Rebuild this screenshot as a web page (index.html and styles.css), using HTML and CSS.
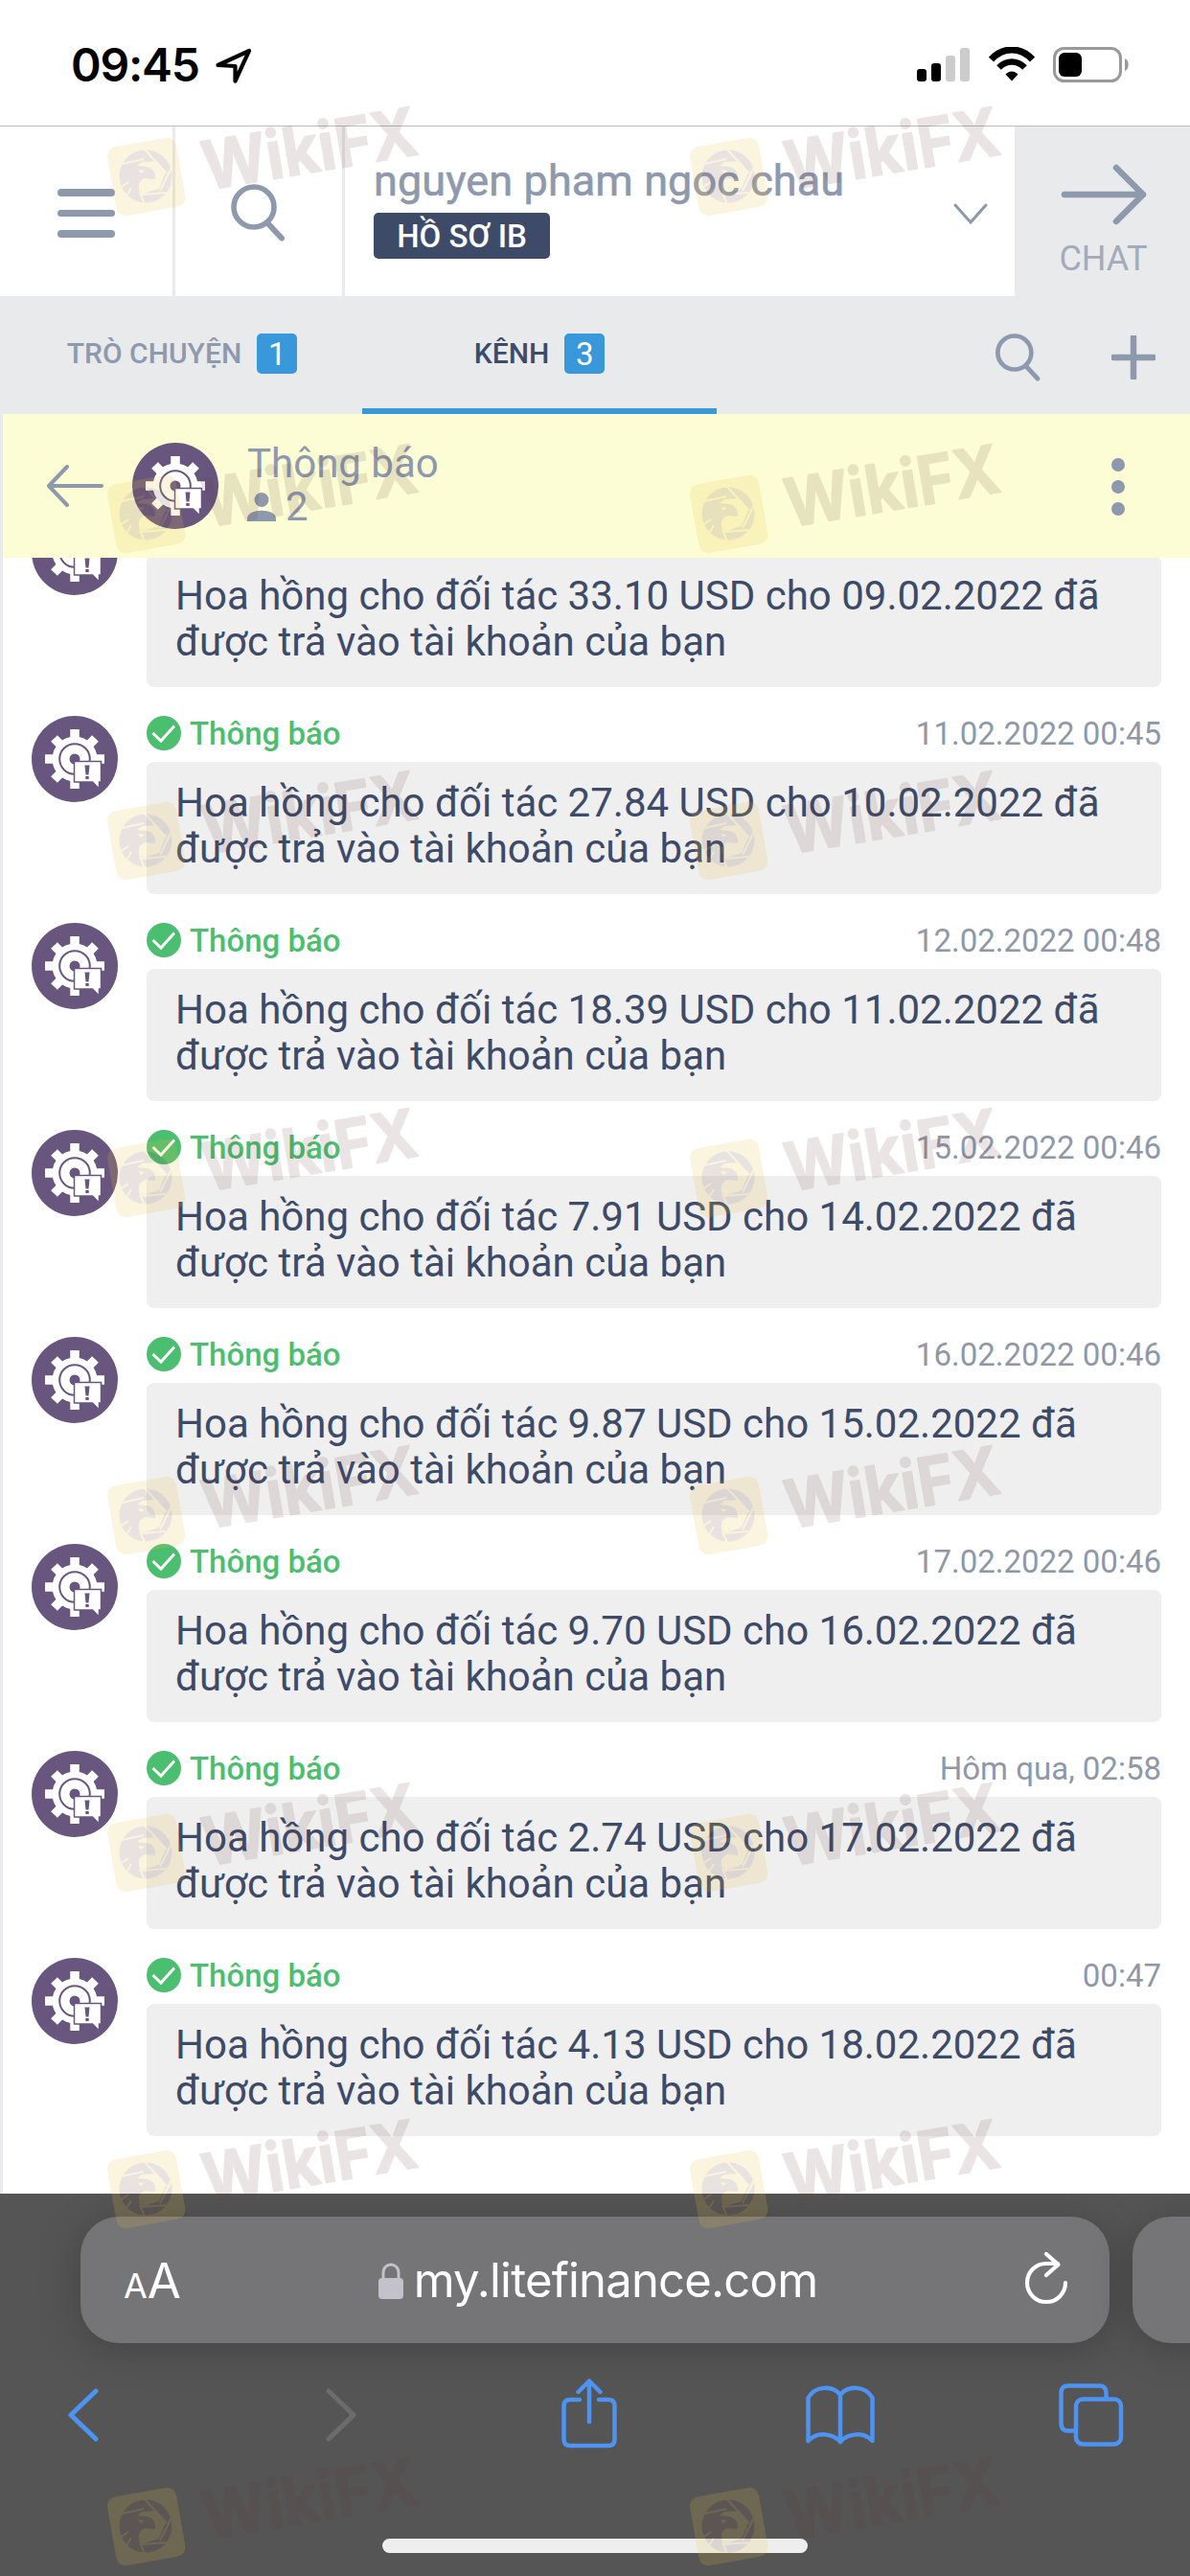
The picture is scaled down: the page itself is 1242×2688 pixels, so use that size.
FILE: index.html
```html
<!DOCTYPE html>
<html lang="vi">
<head>
	<meta charset="UTF-8">
	<meta name="viewport" content="width=device-width, initial-scale=1.0">
	<title>Thông báo</title>
	<link rel="stylesheet" href="styles.css">
</head>
<body>
	<!-- shared icons -->
	<svg class="defs" width="0" height="0">
		<symbol id="avatar" viewBox="0 0 90 90">
			<circle cx="45" cy="45" r="45" fill="#68567f"/>
			<g stroke="#fff" stroke-width="9.5">
				<path d="M45 14v62M14 45h62M23.500 23.500l43 43M66.500 23.500l-43 43"/>
			</g>
			<circle cx="45" cy="45" r="23.500" fill="#fff"/>
			<circle cx="45" cy="45" r="15.800" fill="none" stroke="#68567f" stroke-width="2"/>
			<circle cx="45" cy="45" r="5.500" fill="#68567f"/>
			<path d="M44.500 47.500h28v21.500h-2v7l-7-7h-19z" fill="#fff" stroke="#68567f" stroke-width="1.500"/>
			<path d="M55.500 51.500h5l-1 10h-3zM56.300 63h3.400v3h-3.400z" fill="#68567f"/>
		</symbol>
		<symbol id="check" viewBox="0 0 36 36">
			<circle cx="18" cy="18" r="18" fill="#4bbf6f"/>
			<path d="M6.500 18l8.500 8L29 10.500" fill="none" stroke="#fff" stroke-width="3"/>
		</symbol>
		<symbol id="search" viewBox="0 0 60 62">
			<circle cx="25" cy="25" r="21" fill="none" stroke="currentColor" stroke-width="5.600"/>
			<path d="M39.500 42L54 57.500" stroke="currentColor" stroke-width="6" stroke-linecap="round"/>
		</symbol>
		<symbol id="wm" viewBox="0 0 360 130">
			<g opacity=".17">
				<rect x="16.200" y="48" width="73" height="73" rx="10" transform="rotate(-10 52.700 84.500)" fill="#ecc040"/>
				<circle cx="52" cy="84" r="27.500" fill="#7d5a50"/>
				<path d="M48 69l16-1 9 12-7 17-16 5-4-1c-3-8 0-14 6-15l10 1c1-7-3-12-9-13l-10-1z" fill="#ecc040"/>
				<path d="M27 71l23-5M51 56l23 25M80 73L67 99M73 101l-26 2M46 101l5 12M37 96l-6 10M34 90l-9 6" fill="none" stroke="#ecc040" stroke-width="2"/>
				<path d="M44 77l7 1-4 3z" fill="#ecc040"/>
			</g>
			<text x="0" y="0" transform="translate(115.500 98.500) rotate(-9.500)" textLength="226" lengthAdjust="spacingAndGlyphs">WikiFX</text>
		</symbol>
	</svg>

	<div class="phone">
		<div class="status">
			<span class="clock">09:45</span>
			<svg class="location" width="40" height="40" viewBox="0 0 40 40"><path d="M3.500 19L36 4 21.500 35.500V20z" fill="none" stroke="#000" stroke-width="4.200" stroke-linejoin="round"/></svg>
			<svg class="signal" width="56" height="36" viewBox="0 0 56 36">
				<rect x="0" y="22" width="10" height="13" rx="3"/>
				<rect x="15" y="16" width="10" height="19" rx="3"/>
				<rect x="30" y="8" width="10" height="27" rx="3" fill="#ccc"/>
				<rect x="45" y="0" width="10" height="35" rx="3" fill="#ccc"/>
			</svg>
			<svg class="wifi" width="48" height="36" viewBox="0 0 48 36">
				<path d="M2.500 13C15-.5 33-.5 45.500 13" fill="none" stroke="#000" stroke-width="7"/>
				<path d="M10.500 21.500c8-8 19-8 27 0" fill="none" stroke="#000" stroke-width="6.500"/>
				<path d="M17.500 28.500c4-4 9-4 13 0L24 35.500z"/>
			</svg>
			<svg class="battery" width="80" height="38" viewBox="0 0 80 38">
				<rect x="1.500" y="1.500" width="69" height="34" rx="10" fill="none" stroke="#999" stroke-width="3"/>
				<rect x="6" y="6" width="24" height="25" rx="6"/>
				<path d="M75 12c5 2 5 11 0 13z" fill="#999"/>
			</svg>
		</div>

		<div class="header">
			<a class="menu"><i></i><i></i><i></i></a>
			<a class="find"><svg width="60" height="62"><use href="#search"/></svg></a>
			<div class="profile">
				<div>
					<div class="name">nguyen pham ngoc chau</div>
					<span class="tag">HỒ SƠ IB</span>
				</div>
				<svg width="36" height="24" viewBox="0 0 36 24"><path d="M2 3l16 18L34 3" fill="none" stroke="#8e99ad" stroke-width="3" stroke-linecap="round"/></svg>
			</div>
			<a class="chat">
				<svg width="90" height="64" viewBox="0 0 90 64"><path d="M4 32h82M58 4l28 28-28 28" fill="none" stroke="#8e99ad" stroke-width="6.500" stroke-linecap="round" stroke-linejoin="round"/></svg>
				<span>CHAT</span>
			</a>
		</div>

		<div class="tabs">
			<a class="tab">TRÒ CHUYỆN <b>1</b></a>
			<a class="tab active">KÊNH <b>3</b></a>
			<svg class="tab-search" width="50" height="52"><use href="#search"/></svg>
			<svg class="plus" width="46" height="46" viewBox="0 0 46 46"><path d="M23 2v42M2 23h42" stroke="#8e99ad" stroke-width="6.500" stroke-linecap="round"/></svg>
		</div>

		<div class="room">
			<svg class="back" width="62" height="44" viewBox="0 0 62 44"><path d="M59 22H4M23 2L4 22l19 20" fill="none" stroke="#8e99ad" stroke-width="4" stroke-linecap="round" stroke-linejoin="round"/></svg>
			<svg class="avatar"><use href="#avatar"/></svg>
			<div class="room-info">
				<div>Thông báo</div>
				<div class="members">
					<svg width="30" height="30" viewBox="0 0 30 30"><circle cx="15" cy="7.500" r="7.500"/><path d="M0 30v-3c0-11 30-11 30 0v3z"/></svg>2
				</div>
			</div>
			<div class="dots"><i></i><i></i><i></i></div>
		</div>

		<div class="messages">
			<div class="message">
				<svg class="avatar"><use href="#avatar"/></svg>
				<div class="content">
					<div class="meta"></div>
					<div class="bubble">Hoa hồng cho đối tác 33.10 USD cho 09.02.2022 đã<br>được trả vào tài khoản của bạn</div>
				</div>
			</div>
			<div class="message">
				<svg class="avatar"><use href="#avatar"/></svg>
				<div class="content">
					<div class="meta"><svg class="check"><use href="#check"/></svg><b>Thông báo</b><span>11.02.2022 00:45</span></div>
					<div class="bubble">Hoa hồng cho đối tác 27.84 USD cho 10.02.2022 đã<br>được trả vào tài khoản của bạn</div>
				</div>
			</div>
			<div class="message">
				<svg class="avatar"><use href="#avatar"/></svg>
				<div class="content">
					<div class="meta"><svg class="check"><use href="#check"/></svg><b>Thông báo</b><span>12.02.2022 00:48</span></div>
					<div class="bubble">Hoa hồng cho đối tác 18.39 USD cho 11.02.2022 đã<br>được trả vào tài khoản của bạn</div>
				</div>
			</div>
			<div class="message">
				<svg class="avatar"><use href="#avatar"/></svg>
				<div class="content">
					<div class="meta"><svg class="check"><use href="#check"/></svg><b>Thông báo</b><span>15.02.2022 00:46</span></div>
					<div class="bubble">Hoa hồng cho đối tác 7.91 USD cho 14.02.2022 đã<br>được trả vào tài khoản của bạn</div>
				</div>
			</div>
			<div class="message">
				<svg class="avatar"><use href="#avatar"/></svg>
				<div class="content">
					<div class="meta"><svg class="check"><use href="#check"/></svg><b>Thông báo</b><span>16.02.2022 00:46</span></div>
					<div class="bubble">Hoa hồng cho đối tác 9.87 USD cho 15.02.2022 đã<br>được trả vào tài khoản của bạn</div>
				</div>
			</div>
			<div class="message">
				<svg class="avatar"><use href="#avatar"/></svg>
				<div class="content">
					<div class="meta"><svg class="check"><use href="#check"/></svg><b>Thông báo</b><span>17.02.2022 00:46</span></div>
					<div class="bubble">Hoa hồng cho đối tác 9.70 USD cho 16.02.2022 đã<br>được trả vào tài khoản của bạn</div>
				</div>
			</div>
			<div class="message">
				<svg class="avatar"><use href="#avatar"/></svg>
				<div class="content">
					<div class="meta"><svg class="check"><use href="#check"/></svg><b>Thông báo</b><span>Hôm qua, 02:58</span></div>
					<div class="bubble">Hoa hồng cho đối tác 2.74 USD cho 17.02.2022 đã<br>được trả vào tài khoản của bạn</div>
				</div>
			</div>
			<div class="message">
				<svg class="avatar"><use href="#avatar"/></svg>
				<div class="content">
					<div class="meta"><svg class="check"><use href="#check"/></svg><b>Thông báo</b><span>00:47</span></div>
					<div class="bubble">Hoa hồng cho đối tác 4.13 USD cho 18.02.2022 đã<br>được trả vào tài khoản của bạn</div>
				</div>
			</div>
		</div>

		<div class="browser">
			<div class="urls">
				<div class="url">
					<span class="text-size"><small>A</small>A</span>
					<span class="domain">
						<svg width="26" height="38" viewBox="0 0 26 38"><rect y="16" width="26" height="22" rx="4" fill="#c3c2ca"/><path d="M5 18v-7c0-12 16-12 16 0v7" fill="none" stroke="#c3c2ca" stroke-width="3"/></svg>
						<span>my.litefinance.com</span>
					</span>
					<svg class="reload" width="50" height="60" viewBox="0 0 50 60"><path d="M45 35a20 20 0 1 1-20-20h12M25 5l12.500 11L25 27" fill="none" stroke="#fff" stroke-width="4.200" stroke-linecap="round" stroke-linejoin="round"/></svg>
				</div>
				<div class="url next"></div>
			</div>
			<div class="toolbar">
				<svg width="34" height="80" viewBox="0 0 34 80"><path d="M30 15L4 40l26 25" fill="none" stroke="#4c93f2" stroke-width="5" stroke-linecap="round" stroke-linejoin="round"/></svg>
				<svg width="34" height="80" viewBox="0 0 34 80"><path d="M4 15l26 25L4 65" fill="none" stroke="#6c6c6d" stroke-width="5" stroke-linecap="round" stroke-linejoin="round"/></svg>
				<svg width="58" height="80" viewBox="0 0 58 80"><path d="M19 24H9q-6.500 0-6.500 6.500v35Q2.500 72 9 72h40q6.500 0 6.500-6.500v-35Q55.500 24 49 24H39M29 47V5M17.500 16L29 4.500 40.500 16" fill="none" stroke="#4c93f2" stroke-width="4.500" stroke-linecap="round" stroke-linejoin="round"/></svg>
				<svg width="72" height="80" viewBox="0 0 72 80"><path d="M36 68C28 59 12 57 2.500 67V22C10 9 28 9 36 19c8-10 26-10 33.500 3v45C60 57 44 59 36 68zM36 19v49" fill="none" stroke="#4c93f2" stroke-width="4.500" stroke-linejoin="round"/></svg>
				<svg width="68" height="80" viewBox="0 0 68 80"><g fill="none" stroke="#4c93f2" stroke-width="4.500"><rect x="18" y="23.500" width="47" height="47" rx="7"/><path d="M18 56.500h-8q-7.500 0-7.500-7.500V17q0-7.500 7.500-7.500h32q7.500 0 7.500 7.500v6.500"/></g></svg>
			</div>
			<div class="home"></div>
		</div>

		<div class="watermarks">
			<svg><use href="#wm"/></svg><svg><use href="#wm"/></svg>
			<svg><use href="#wm"/></svg><svg><use href="#wm"/></svg>
			<svg><use href="#wm"/></svg><svg><use href="#wm"/></svg>
			<svg><use href="#wm"/></svg><svg><use href="#wm"/></svg>
			<svg><use href="#wm"/></svg><svg><use href="#wm"/></svg>
			<svg><use href="#wm"/></svg><svg><use href="#wm"/></svg>
			<svg><use href="#wm"/></svg><svg><use href="#wm"/></svg>
			<svg><use href="#wm"/></svg><svg><use href="#wm"/></svg>
		</div>
	</div>
</body>
</html>
```
FILE: styles.css
```css
* {
	margin: 0;
	padding: 0;
	box-sizing: border-box;
}

body {
	font-family: Roboto, "Liberation Sans", sans-serif;
	color: #3d4a68;
	background-color: #ffffff;
}

svg {
	display: block;
	flex: none;
}

.defs {
	position: absolute;
}

.phone {
	position: relative;
	display: flex;
	flex-direction: column;
	width: 1242px;
	height: 2688px;
	overflow: hidden;
}

/* status bar */
.status {
	display: flex;
	align-items: flex-start;
	height: 132px;
	padding: 49px 63px 0 74px;
	border-bottom: 1px solid #bdbabb;
}

.clock {
	width: 140px;
	margin-top: -10px;
	font-family: Inter, sans-serif;
	font-size: 48px;
	font-weight: 600;
	letter-spacing: -1.2px;
	line-height: 58px;
	white-space: nowrap;
	color: #000000;
}

.location {
	margin-left: 10px;
}

.signal {
	margin: 1px 19px 0 auto;
}

.wifi {
	margin-right: 19px;
}

/* site header */
.header {
	display: flex;
	height: 177px;
}

.menu {
	display: flex;
	flex-direction: column;
	gap: 14px;
	width: 183px;
	padding: 65px 60px 0;
	border-right: 3px solid #e9eaec;
}

.menu i {
	height: 7.500px;
	border-radius: 4px;
	background-color: #8e99ad;
}

.find {
	width: 177px;
	padding: 59px 0 0 57px;
	border-right: 3px solid #e9eaec;
	color: #8e99ad;
}

.profile {
	display: flex;
	flex: 1;
	justify-content: space-between;
	padding: 29px 28px 0 30px;
}

.profile svg {
	margin-top: 50px;
}

.name {
	height: 61px;
	font-size: 45px;
	line-height: 56px;
	letter-spacing: .1px;
	white-space: nowrap;
	color: #8e99ad;
	-webkit-text-stroke: .6px #8e99ad;
}

.tag {
	display: block;
	width: 184px;
	height: 48px;
	border-radius: 5px;
	font-size: 33px;
	font-weight: 500;
	line-height: 49px;
	text-align: center;
	color: #ffffff;
	background-color: #3d4a68;
}

.chat {
	display: flex;
	flex-direction: column;
	align-items: center;
	width: 183px;
	padding: 39px 0 0 2px;
	font-size: 36px;
	line-height: 42px;
	color: #a3abba;
	background-color: #e8eaec;
}

.chat span {
	margin-top: 14px;
}

/* tabs */
.tabs {
	display: flex;
	height: 123px;
	color: #8e99ad;
	background-color: #e8eaec;
}

.tab {
	display: flex;
	align-items: center;
	justify-content: center;
	gap: 16px;
	width: 370px;
	height: 123px;
	padding-top: 3px;
	border-bottom: 6px solid transparent;
	font-size: 30px;
	font-weight: 500;
	line-height: 38px;
}

.tab:first-child {
	width: 378px;
	padding-left: 2px;
}

.tab.active {
	border-color: #3998da;
	color: #3d4a68;
}

.tab b {
	width: 42px;
	height: 42px;
	border-radius: 5px;
	font-size: 33px;
	font-weight: 400;
	line-height: 43px;
	text-align: center;
	color: #ffffff;
	background-color: #3998da;
}

.tab-search {
	margin: 38px 0 0 290px;
}

.plus {
	margin: 41px 0 0 72px;
}

/* room header */
.room {
	display: flex;
	height: 150px;
	padding: 30px 68px 0 44px;
	border-left: 3px solid #e9eaec;
	font-size: 42px;
	line-height: 45px;
	color: #8e99ad;
	background-color: #fcfdd4;
}

.avatar {
	width: 90px;
	height: 90px;
}

.back {
	margin: 23px 29px 0 0;
}

.room-info {
	margin: -1px 0 0 30px;
}

.members {
	display: flex;
	align-items: center;
	gap: 10px;
}

.members svg {
	fill: #8e99ad;
}

.dots {
	display: flex;
	flex-direction: column;
	gap: 9px;
	margin: 16px 0 0 auto;
}

.dots i {
	width: 14px;
	height: 14px;
	border-radius: 50%;
	background-color: #8e99ad;
}

/* messages, scrolled to the end */
.messages {
	display: flex;
	flex: 1;
	flex-direction: column;
	justify-content: flex-end;
	gap: 30px;
	min-height: 0;
	padding: 0 30px 60px;
	border-left: 3px solid #e9eaec;
	overflow: hidden;
}

.message {
	display: flex;
	flex: none;
	gap: 30px;
}

.content {
	flex: 1;
}

.meta {
	display: flex;
	height: 48px;
	font-size: 33px;
	line-height: 37px;
	color: #8f98a9;
}

.meta b {
	margin-left: 9px;
	font-weight: 500;
	color: #4bbf6f;
}

.meta span {
	margin-left: auto;
}

.check {
	width: 36px;
	height: 36px;
}

.bubble {
	height: 138px;
	padding: 19px 30px;
	border-radius: 8px;
	font-size: 42px;
	line-height: 48px;
	white-space: nowrap;
	background-color: #efefef;
}

/* browser bar */
.browser {
	height: 399px;
	padding-top: 24px;
	background-color: #555556;
	overflow: hidden;
}

.urls {
	display: flex;
	gap: 24px;
	padding-left: 84px;
}

.url {
	display: flex;
	flex: none;
	justify-content: space-between;
	width: 1074px;
	height: 132px;
	padding: 0 41px 0 45px;
	border-radius: 40px;
	font-family: Inter, sans-serif;
	color: #ffffff;
	background-color: #757577;
	box-shadow: 0 6px 44px rgba(0, 0, 0, .22);
}

.text-size {
	width: 60px;
	margin-right: -8px;
	font-size: 51px;
	line-height: 133px;
	white-space: nowrap;
}

.text-size small {
	font-size: 36px;
}

.domain {
	display: flex;
	gap: 11px;
	font-size: 49px;
	line-height: 133px;
	letter-spacing: -.8px;
}

.domain svg {
	margin-top: 48px;
}

.reload {
	margin-top: 34px;
}

.toolbar {
	display: grid;
	grid-template-columns: 269px 247px 255px 264px 68px;
	height: 204px;
	padding: 35px 0 0 70px;
}

.home {
	width: 444px;
	height: 15px;
	margin: 0 auto;
	border-radius: 8px;
	background-color: #eeeeee;
}

/* watermark layer over the whole screen */
.watermarks {
	position: absolute;
	top: 100px;
	left: 100px;
	display: grid;
	grid-template-columns: 608px 360px;
	grid-template-rows: 352px 341px 352px 352px 352px 351px 352px 130px;
	pointer-events: none;
}

.watermarks svg {
	width: 360px;
	height: 130px;
	overflow: visible;
}

#wm {
	overflow: visible;
}

#wm text {
	font-family: Inter, sans-serif;
	font-size: 70px;
	font-weight: 700;
	fill: #643535;
	stroke: #643535;
	stroke-width: 1.500px;
	stroke-linejoin: round;
	opacity: .125;
}
```
